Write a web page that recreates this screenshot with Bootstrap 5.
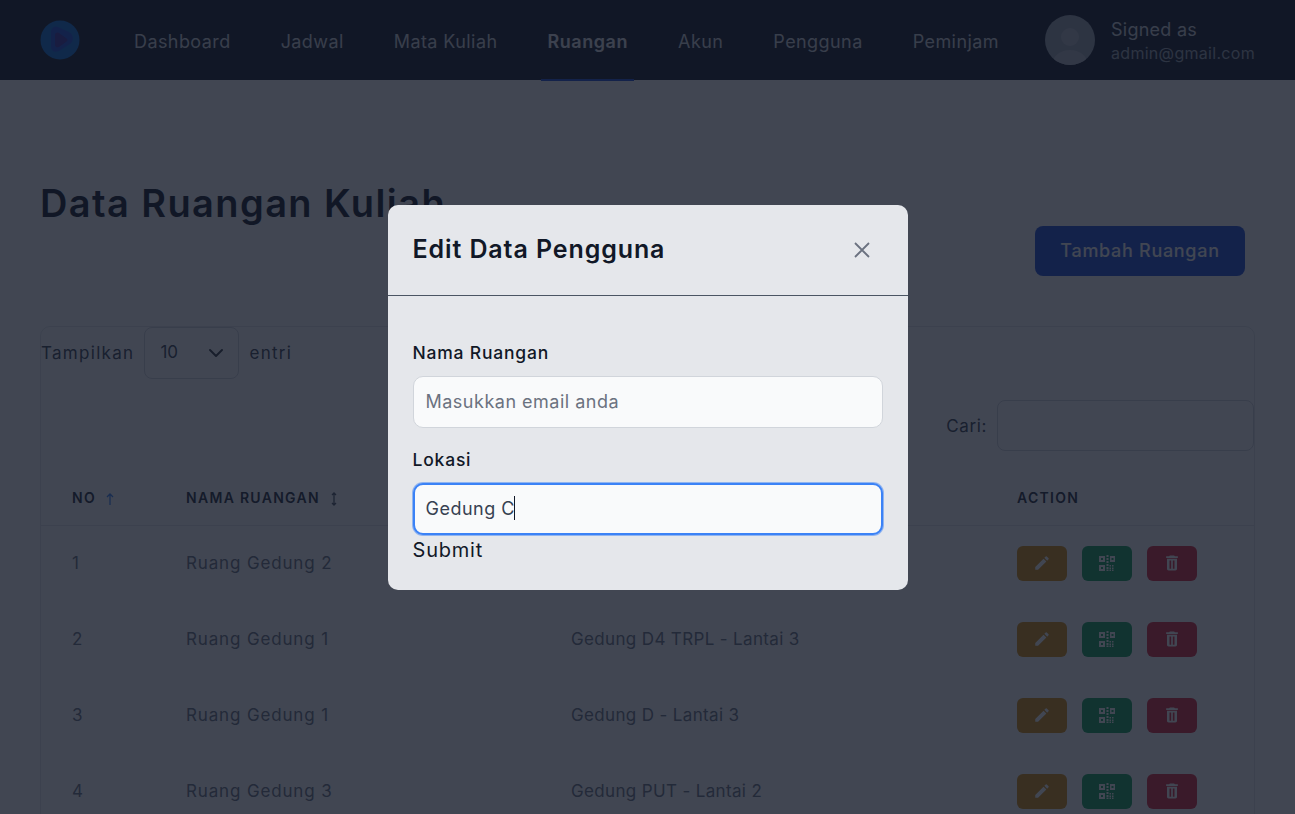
<!DOCTYPE html>
<html lang="id">
<head>
    <meta charset="UTF-8">
    <meta name="viewport" content="width=device-width, initial-scale=1.0">
    <title>Data Ruangan Kuliah</title>
    <link href="https://cdn.jsdelivr.net/npm/bootstrap@5.3.0/dist/css/bootstrap.min.css" rel="stylesheet">
    <style>
        body {
            font-family: Inter, "Open Sans", sans-serif;
            color: #111827;
            background: #fff;
        }
        .top-bar {
            background: #111827;
            height: 80px;
            padding: 0 40px;
        }
        .top-bar .navbar-nav { margin-left: 48px; gap: 38px; height: 80px; }
        .top-bar .navbar-nav .nav-link {
            color: #d1d5db;
            font-size: 18px;
            letter-spacing: .42px;
            padding: 3px 6px 0;
            display: flex;
            align-items: center;
            border-bottom: 2px solid transparent;
            height: 81px;
        }
        .top-bar .navbar-nav .nav-link.active {
            color: #e5e7eb;
            font-weight: 600;
            letter-spacing: .55px;
            border-bottom-color: #1d4ed8;
        }
        .user-info { padding-top: 2px; }
        .user-name { font-size: 18px; color: #d1d5db; line-height: 24px; letter-spacing: .25px; }
        .user-mail { font-size: 16px; color: #9ca3af; line-height: 22px; letter-spacing: .3px; }
        .page-body { padding: 96px 40px 0; }
        .page-title { font-size: 38px; font-weight: 600; line-height: 54px; margin: 0; color: #111827; letter-spacing: 1.4px; }
        .add-btn {
            background: #1d4ed8;
            color: #fff;
            font-size: 18px;
            font-weight: 500;
            letter-spacing: .7px;
            width: 210px;
            height: 50px;
            padding: 0 0 2px;
            border-radius: 8px;
            margin-top: 50px;
            margin-right: 10px;
            border: 0;
        }
        .table-box {
            margin-top: 50px;
            border: 1px solid #e5e7eb;
            border-radius: 10px;
            color: #374151;
            font-size: 17px;
        }
        .box-row { gap: 10px; }
        .box-text { letter-spacing: 1.3px; padding-top: 2px; }
        .search-label { letter-spacing: .6px; padding-top: 2px; }
        .len-select, .search-input {
            border: 1px solid #d1d5db;
            border-radius: 8px;
            background-color: transparent;
            color: #374151;
            font-size: 17px;
        }
        .len-select { width: 95px; height: 52px; padding-left: 15px; background-size: 20px 16px; background-position: right 12px center; }
        .search-input { width: 257px; height: 51px; }
        .search-row { margin-top: 21px; }
        .data-table { table-layout: fixed; margin-top: 20px; margin-bottom: 0; --bs-table-bg: transparent; --bs-table-color: #6b7280; }
        .data-table th {
            font-size: 14px;
            font-weight: 600;
            letter-spacing: 1.3px;
            color: #1f2937;
            height: 54px;
            padding: 0 0 0 31px;
            vertical-align: middle;
            border-bottom: 1px solid #e5e7eb;
        }
        .data-table td {
            height: 76px;
            padding: 1px 0 0 31px;
            vertical-align: middle;
            border-bottom: 0;
            font-size: 17px;
        }
        .cell-name { letter-spacing: .85px; }
        .cell-loc { letter-spacing: .35px; }
        .col-no { width: 114px; }
        .col-name { width: 385px; }
        .col-loc { width: 446px; }
        .act-group { gap: 15px; margin-top: -1px; }
        .act-btn {
            width: 50px;
            height: 35px;
            padding: 0;
            border: 0;
            border-radius: 6px;
            display: inline-flex;
            align-items: center;
            justify-content: center;
            color: #fff;
        }
        .act-edit { background: #d48c0c; }
        .act-qr { background: #0f9f55; }
        .act-del { background: #dc2638; }
        .modal-backdrop.show { background: #111827; opacity: .8; }
        .edit-dialog { max-width: 520px; width: 520px; margin: 205px auto 0; }
        .edit-dialog .modal-content {
            background: #e5e7eb;
            border: 0;
            border-radius: 10px;
            height: 385px;
        }
        .edit-dialog .modal-header {
            height: 91px;
            padding: 0 25px;
            border-bottom: 1px solid #4b5563;
            border-radius: 0;
        }
        .edit-dialog .modal-title { font-size: 25px; font-weight: 600; color: #111827; letter-spacing: .9px; }
        .close-x { background: none; border: 0; padding: 0; line-height: 0; margin-right: 13px; }
        .edit-dialog .modal-body { padding: 45px 25px 0; }
        .field-label { font-size: 17.5px; font-weight: 500; color: #111827; line-height: 24px; margin-bottom: 11px; display: block; letter-spacing: .8px; }
        .edit-input {
            height: 52px;
            background: #f9fafb;
            border: 1px solid #d1d5db;
            border-radius: 10px;
            font-size: 18px;
            letter-spacing: .5px;
            padding: 0 12px 2px;
            color: #374151;
            margin-bottom: 20px;
        }
        .edit-input::placeholder { color: #6b7280; }
        .edit-input.is-focus {
            border: 2px solid #3b82f6;
            box-shadow: 0 0 0 1px rgba(59, 130, 246, .5);
            padding-left: 11px;
            margin-bottom: 0;
            caret-color: transparent;
        }
        .text-caret {
            position: absolute;
            left: 101px;
            top: 13px;
            width: 1px;
            height: 24px;
            background: #111827;
        }
        .submit-btn {
            background: none;
            border: 0;
            padding: 0;
            font-size: 20px;
            letter-spacing: .8px;
            line-height: 30px;
            color: #111827;
        }
    </style>
</head>
<body class="overflow-hidden">
    <nav class="navbar navbar-expand top-bar d-flex align-items-center">
        <svg width="40" height="40" viewBox="0 0 40 40" class="flex-shrink-0">
            <ellipse cx="20" cy="20" rx="19.5" ry="19.5" fill="#0a6fd8"/>
            <path d="M11 12c0-4 3-6 7-5l11 5c5 3 5 9 1 12l-11 7c-4 2-8 0-8-4z" fill="#1d4ed8"/>
            <path d="M15 15c0-2 2-3 4-2l7 5c2 1 2 3 0 4l-7 5c-2 1-4 0-4-2z" fill="#3730a3"/>
        </svg>
        <ul class="navbar-nav">
            <li class="nav-item"><a class="nav-link" href="#">Dashboard</a></li>
            <li class="nav-item"><a class="nav-link" href="#">Jadwal</a></li>
            <li class="nav-item"><a class="nav-link" href="#">Mata Kuliah</a></li>
            <li class="nav-item"><a class="nav-link active" href="#">Ruangan</a></li>
            <li class="nav-item"><a class="nav-link" href="#">Akun</a></li>
            <li class="nav-item"><a class="nav-link" href="#">Pengguna</a></li>
            <li class="nav-item"><a class="nav-link" href="#">Peminjam</a></li>
        </ul>
        <div class="d-flex align-items-center gap-3 ms-auto">
            <svg width="50" height="50" viewBox="0 0 50 50">
                <circle cx="25" cy="25" r="25" fill="#9ca3af"/>
                <clipPath id="avatarClip"><circle cx="25" cy="25" r="25"/></clipPath>
                <g clip-path="url(#avatarClip)" fill="#b4b9c2">
                    <circle cx="25" cy="22" r="9"/>
                    <ellipse cx="25" cy="48" rx="17" ry="13"/>
                </g>
            </svg>
            <div class="user-info">
                <div class="user-name">Signed as</div>
                <div class="user-mail">admin@gmail.com</div>
            </div>
        </div>
    </nav>

    <main class="page-body">
        <div class="d-flex justify-content-between align-items-start">
            <h1 class="page-title">Data Ruangan Kuliah</h1>
            <button class="btn add-btn">Tambah Ruangan</button>
        </div>
        <div class="table-box">
            <div class="d-flex align-items-center box-row">
                <span class="box-text">Tampilkan</span>
                <select class="form-select len-select"><option>10</option></select>
                <span class="box-text">entri</span>
            </div>
            <div class="d-flex justify-content-end align-items-center box-row search-row">
                <span class="search-label">Cari:</span>
                <input class="form-control search-input" type="text">
            </div>
            <table class="table data-table">
                <colgroup>
                    <col class="col-no"><col class="col-name"><col class="col-loc"><col>
                </colgroup>
                <thead>
                    <tr>
                        <th>NO <svg class="ms-1" width="10" height="14" viewBox="0 0 10 14" fill="none" stroke="#3b82f6" stroke-width="1.3"><path d="M5 13V2M2 5l3-3 3 3"/></svg></th>
                        <th>NAMA RUANGAN <svg class="ms-1" width="10" height="14" viewBox="0 0 10 14" fill="none" stroke="#4b5563" stroke-width="1.3"><path d="M5 1v12M3 3l2-2 2 2M3 11l2 2 2-2"/></svg></th>
                        <th>LOKASI</th>
                        <th>ACTION</th>
                    </tr>
                </thead>
                <tbody id="rows"></tbody>
            </table>
        </div>
    </main>

    <div class="modal-backdrop show"></div>
    <div class="modal d-block">
        <div class="modal-dialog edit-dialog">
            <div class="modal-content">
                <div class="modal-header justify-content-between">
                    <h5 class="modal-title">Edit Data Pengguna</h5>
                    <button class="close-x" type="button" aria-label="Close">
                        <svg width="16" height="16" viewBox="0 0 16 16" fill="none" stroke="#6b7280" stroke-width="1.8"><path d="M1 1l14 14M15 1L1 15"/></svg>
                    </button>
                </div>
                <div class="modal-body">
                    <label class="field-label">Nama Ruangan</label>
                    <input class="form-control edit-input" type="text" placeholder="Masukkan email anda">
                    <label class="field-label">Lokasi</label>
                    <div class="position-relative">
                        <input class="form-control edit-input is-focus" type="text" value="Gedung C">
                        <span class="text-caret"></span>
                    </div>
                    <button class="submit-btn" type="button">Submit</button>
                </div>
            </div>
        </div>
    </div>

    <script src="https://cdn.jsdelivr.net/npm/bootstrap@5.3.0/dist/js/bootstrap.bundle.min.js"></script>
    <script>
        const ruangan = [
            ['Ruang Gedung 2', 'Gedung C - Lantai 2'],
            ['Ruang Gedung 1', 'Gedung D4 TRPL - Lantai 3'],
            ['Ruang Gedung 1', 'Gedung D - Lantai 3'],
            ['Ruang Gedung 3', 'Gedung PUT - Lantai 2']
        ];
        const pencil = '<svg width="18" height="18" viewBox="0 0 24 24" fill="currentColor"><path d="M3 17.25V21h3.75L17.81 9.94l-3.75-3.75L3 17.25zM20.71 7.04a1 1 0 0 0 0-1.41l-2.34-2.34a1 1 0 0 0-1.41 0l-1.83 1.83 3.75 3.75 1.83-1.83z"/></svg>';
        const qr = '<svg width="16" height="16" viewBox="0 0 16 16" fill="currentColor"><path fill-rule="evenodd" d="M0 1h6v6H0zM2 3v2h2V3zM0 10h6v6H0zM2 12v2h2v-2zM11 1h5v6h-5zM12.5 3v2h2V3z"/><path d="M7.5 0h2v2h-2zM7.5 3h2v2h-2zM7.5 6h2v2h-2zM7.5 9h2v2h-2zM7.5 12h2v2h-2zM7.5 14.5h2V16h-2zM10.5 10h1.5v1.5h-1.5zM13 10h1.5v1.5H13zM10.5 12.5h1.5V14h-1.5zM13 12.5h1.5V14H13zM10.5 14.5h1.5V16h-1.5zM13 14.5h1.5V16H13z"/></svg>';
        const trash = '<svg width="20" height="20" viewBox="0 0 24 24" fill="currentColor"><path fill-rule="evenodd" d="M6 19c0 1.1.9 2 2 2h8c1.1 0 2-.9 2-2V7H6zM9 9h2v10H9zM13 9h2v10h-2z"/><path d="M19 4h-3.5l-1-1h-5l-1 1H5v2h14z"/></svg>';
        document.getElementById('rows').innerHTML = ruangan.map((r, i) => `
            <tr>
                <td>${i + 1}</td>
                <td class="cell-name">${r[0]}</td>
                <td class="cell-loc">${r[1]}</td>
                <td>
                    <div class="d-flex act-group">
                        <button class="act-btn act-edit">${pencil}</button>
                        <button class="act-btn act-qr">${qr}</button>
                        <button class="act-btn act-del">${trash}</button>
                    </div>
                </td>
            </tr>`).join('');
    </script>
</body>
</html>
